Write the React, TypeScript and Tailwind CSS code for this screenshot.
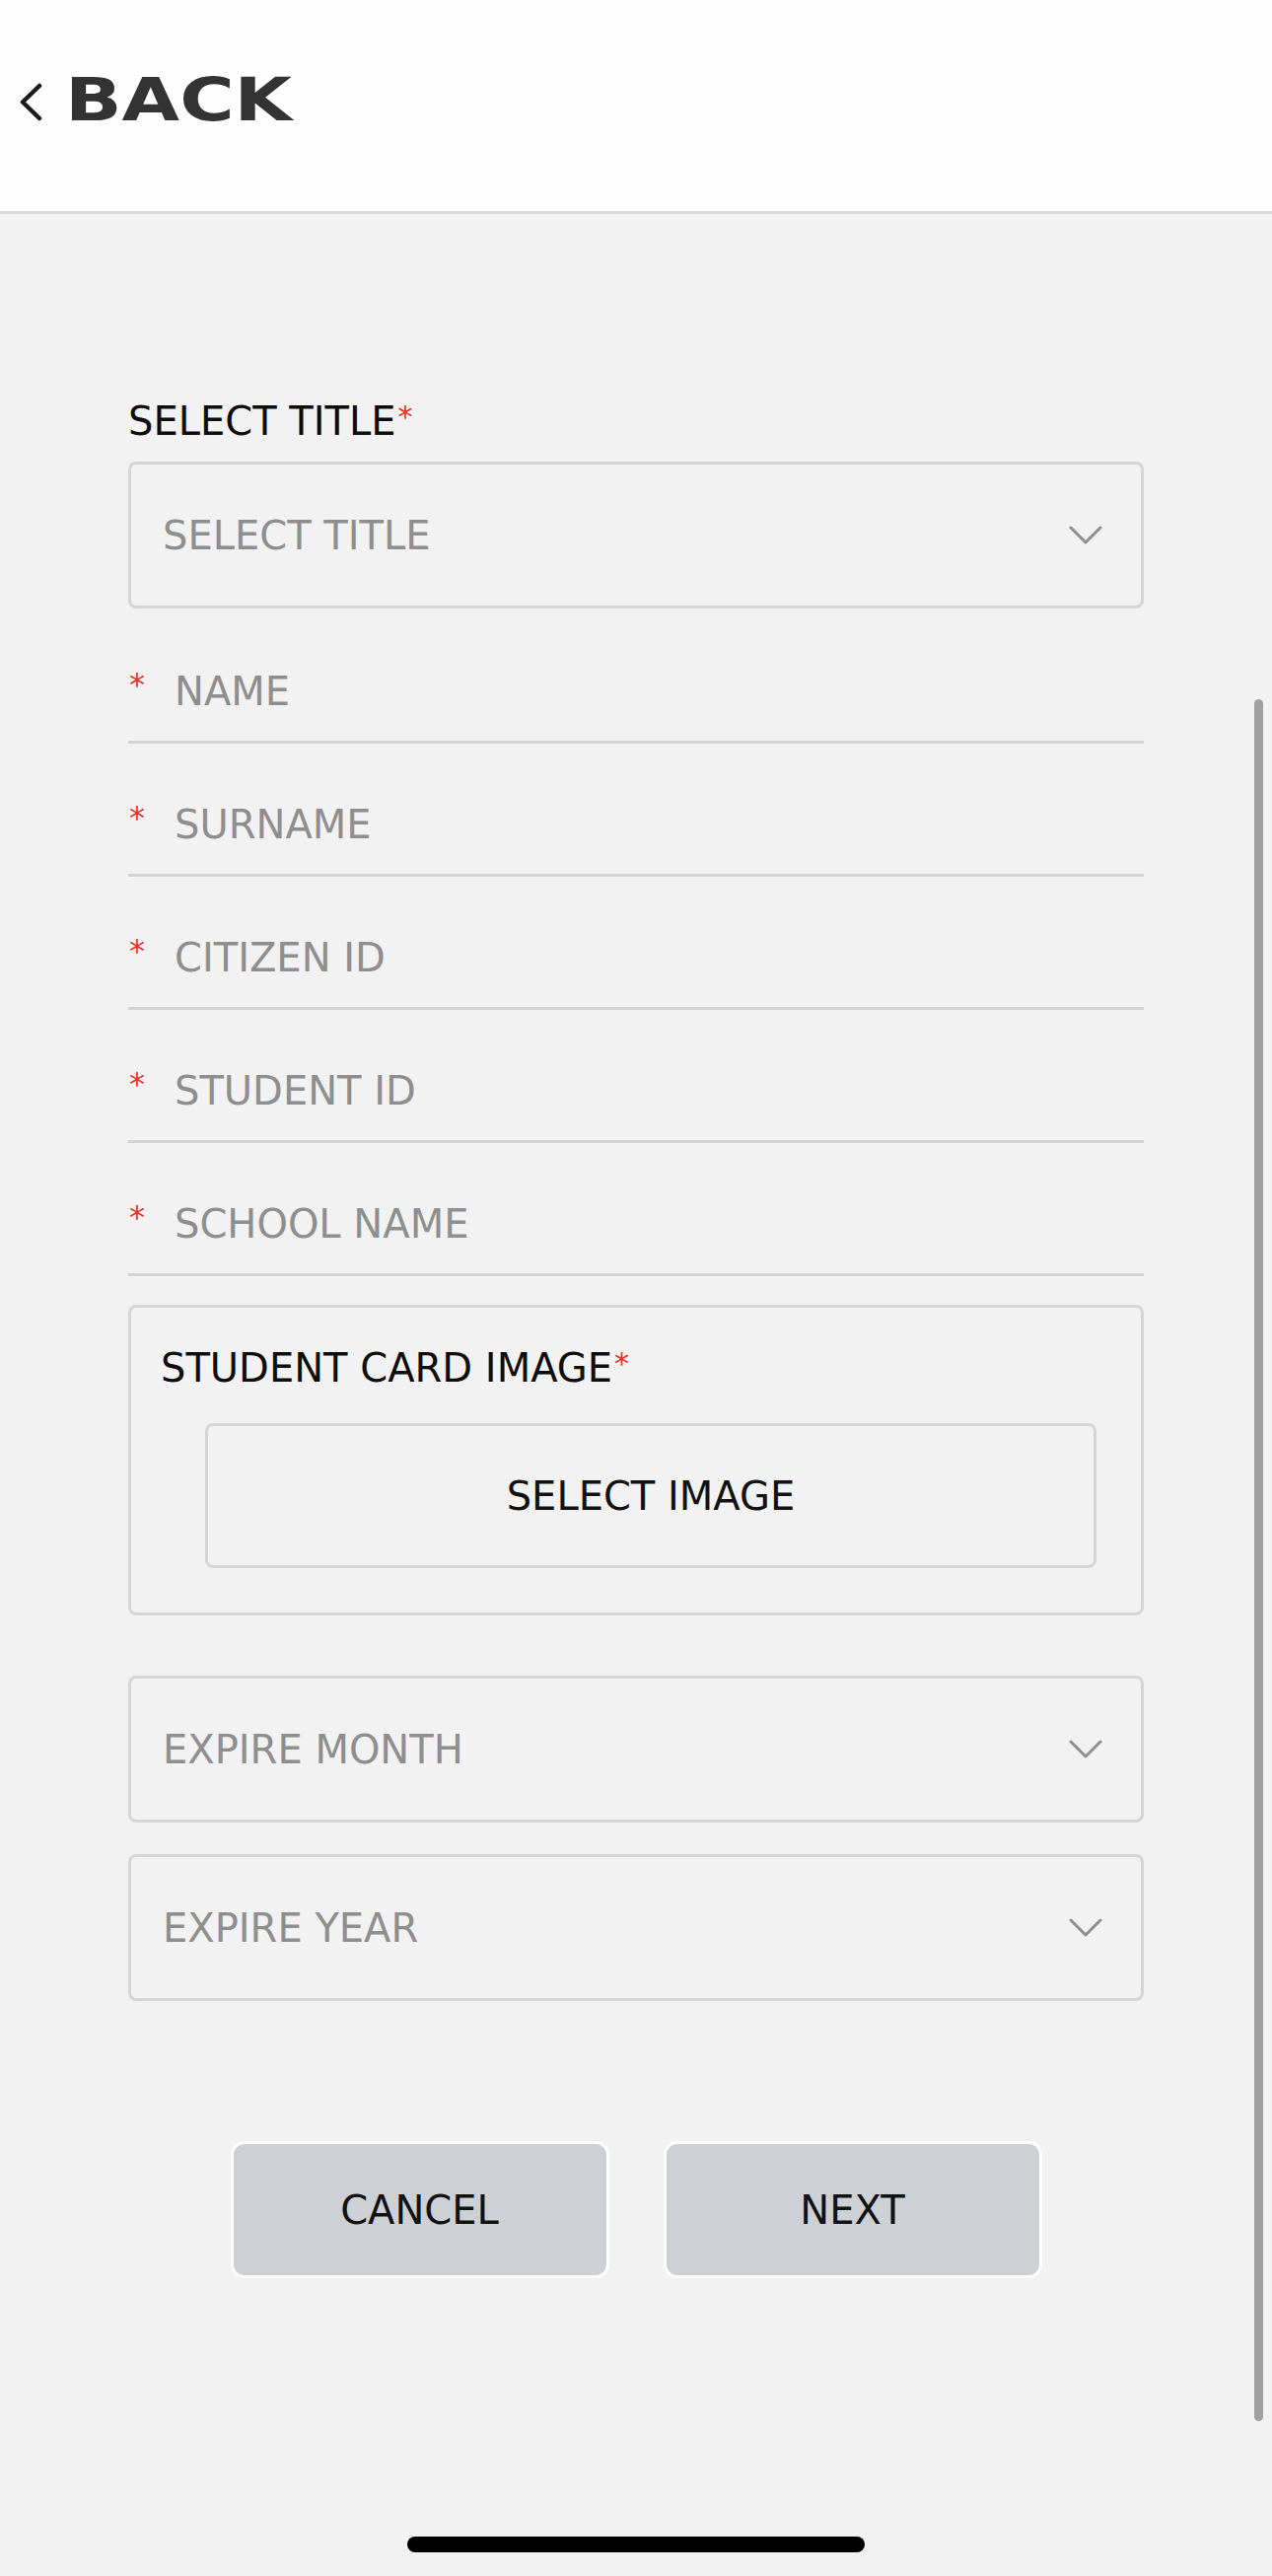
import React from 'react';

const font = { fontFamily: '"DejaVu Sans", "Noto Sans", sans-serif' };

function Chevron() {
    return (
        <svg width="34" height="20" viewBox="0 0 34 20" fill="none" className="shrink-0">
            <polyline points="2,2 17,17 32,2" stroke="#8e8e8e" strokeWidth="3" strokeLinecap="round" strokeLinejoin="round" />
        </svg>
    );
}

function SelectBox({ label }: { label: string }) {
    return (
        <div className="flex h-[149px] items-center justify-between rounded-[8px] border-[3px] border-[#d5d5d5] pl-[32px] pr-[39px]">
            <span className="text-[40px] leading-[48px] text-[#8e8e8e]">{label}</span>
            <Chevron />
        </div>
    );
}

function TextField({ label }: { label: string }) {
    return (
        <div className="mt-[26px] flex h-[109px] items-center border-b-[3px] border-[#d3d3d3] pt-[6px] first-of-type:mt-[28px]">
            <span className="w-[47px] shrink-0 -translate-y-[7px] pl-[1px] text-[32px] leading-none text-[#e3342b]">*</span>
            <span className="text-[40px] leading-[48px] text-[#8e8e8e]">{label}</span>
        </div>
    );
}

function Required() {
    return <span className="relative -top-[8px] ml-[2px] text-[30px] leading-none text-[#e3342b]">*</span>;
}

export default function App() {
    const fields = ['NAME', 'SURNAME', 'CITIZEN ID', 'STUDENT ID', 'SCHOOL NAME'];

    return (
        <div className="relative h-[2612px] w-[1290px] overflow-hidden bg-[#f2f2f2]" style={font}>
            {/* header */}
            <div className="flex h-[217px] border-b-[3px] border-[#d9d9d9] bg-[#fefefe] pl-[20px]">
                <svg width="24" height="40" viewBox="0 0 24 40" fill="none" className="mt-[84px] shrink-0">
                    <polyline points="20,3 3,19.5 20,36" stroke="#1a1a1a" strokeWidth="4.5" strokeLinecap="round" strokeLinejoin="round" />
                </svg>
                <span className="mt-[71px] ml-[22px] h-[60px] origin-left scale-x-[1.26] text-[60px] font-bold leading-[60px] text-[#333333]">
                    BACK
                </span>
            </div>

            <div className="px-[130px]">
                <div className="mt-[186px] h-[48px] text-[40px] leading-[48px] text-[#0d0d0d]">
                    SELECT TITLE<Required />
                </div>
                <div className="mt-[17px]">
                    <SelectBox label="SELECT TITLE" />
                </div>

                <div>
                    {fields.map(f => (
                        <TextField key={f} label={f} />
                    ))}
                </div>

                <div className="mt-[29px] h-[315px] rounded-[8px] border-[3px] border-[#d5d5d5] pl-[30px] pr-[30px] pt-[37px]">
                    <div className="h-[48px] text-[40px] leading-[48px] text-[#0d0d0d]">
                        STUDENT CARD IMAGE<Required />
                    </div>
                    <div className="ml-[45px] mr-[15px] mt-[32px] flex h-[147px] items-center justify-center rounded-[8px] border-[3px] border-[#d5d5d5]">
                        <span className="text-[40px] leading-[48px] text-[#111111]">SELECT IMAGE</span>
                    </div>
                </div>

                <div className="mt-[61px]">
                    <SelectBox label="EXPIRE MONTH" />
                </div>
                <div className="mt-[32px]">
                    <SelectBox label="EXPIRE YEAR" />
                </div>

                <div className="mt-[142px] flex justify-center gap-[55px]">
                    <button className="flex h-[139px] w-[384px] items-center justify-center rounded-[14px] border-[3px] border-white bg-[#cdd0d5] text-[40px] text-[#111111]">
                        CANCEL
                    </button>
                    <button className="flex h-[139px] w-[384px] items-center justify-center rounded-[14px] border-[3px] border-white bg-[#cdd0d5] text-[40px] text-[#111111]">
                        NEXT
                    </button>
                </div>
            </div>

            {/* scrollbar */}
            <div className="absolute left-[1272px] top-[709px] h-[1746px] w-[9px] rounded-full bg-[#a0a0a0]" />
            {/* home indicator */}
            <div className="absolute left-[413px] top-[2572px] h-[16px] w-[464px] rounded-full bg-black" />
        </div>
    );
}
